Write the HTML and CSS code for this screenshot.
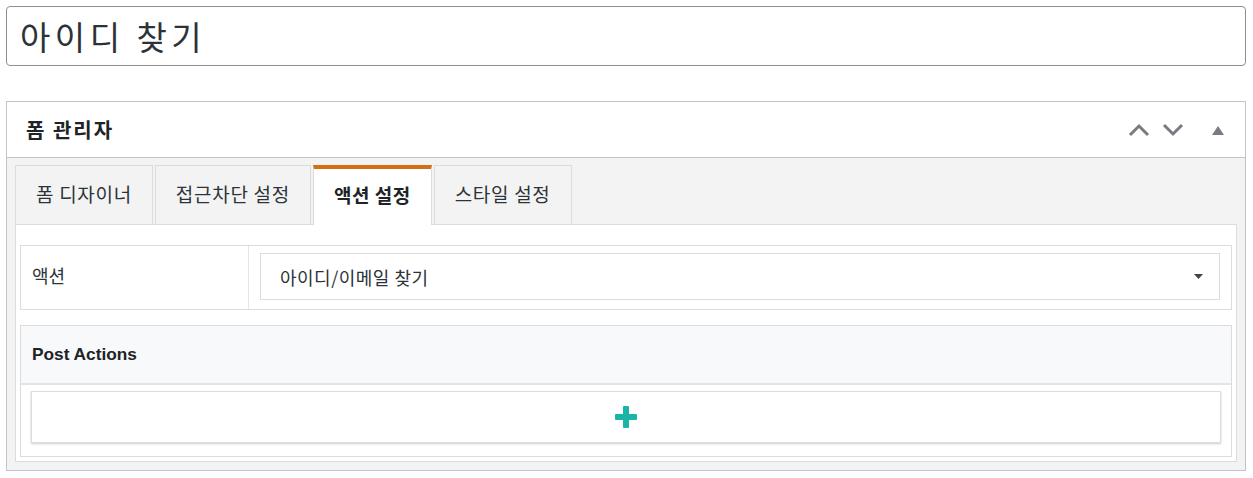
FILE: index.html
```html
<!DOCTYPE html>
<html>

<head>
  <title>아이디 찾기</title>
  <link rel="stylesheet" href="styles.css">
</head>

<body>
  <div class="title-box">아이디 찾기</div>

  <div class="postbox">
    <div class="postbox-header">
      <h2>폼 관리자</h2>
      <div class="handle-actions">
        <svg class="chevron" width="22" height="14" viewBox="0 0 22 14">
          <path d="M2 12 L11 3 L20 12" fill="none" stroke="#787c82" stroke-width="3"/>
        </svg>
        <svg class="chevron" width="22" height="14" viewBox="0 0 22 14">
          <path d="M2 2 L11 11 L20 2" fill="none" stroke="#787c82" stroke-width="3"/>
        </svg>
        <svg class="toggle" width="12" height="10" viewBox="0 0 12 10">
          <path d="M0 10 L6 1 L12 10 Z" fill="#787c82"/>
        </svg>
      </div>
    </div>

    <div class="tab-area">
      <div class="tabs">
        <div class="tab">폼 디자이너</div>
        <div class="tab">접근차단 설정</div>
        <div class="tab active">액션 설정</div>
        <div class="tab">스타일 설정</div>
      </div>

      <div class="tab-content">
        <div class="field-row">
          <div class="field-label">액션</div>
          <div class="field-value">
            <div class="select">
              <span>아이디/이메일 찾기</span>
              <svg width="9" height="5" viewBox="0 0 9 5">
                <path d="M0 0 L9 0 L4.5 5 Z" fill="#444"/>
              </svg>
            </div>
          </div>
        </div>

        <div class="post-actions">
          <div class="post-actions-header">Post Actions</div>
          <div class="post-actions-body">
            <div class="add-button">
              <svg width="22" height="22" viewBox="0 0 22 22">
                <rect x="8" y="0" width="6" height="22" rx="1" fill="#1bb5a8"/>
                <rect x="0" y="8" width="22" height="6" rx="1" fill="#1bb5a8"/>
              </svg>
            </div>
          </div>
        </div>
      </div>
    </div>
  </div>
</body>

</html>
```

FILE: styles.css
```css
body {
  margin: 0;
  padding: 6px 7px 6px 6px;
  font-family: "Noto Sans CJK KR", "Noto Sans", sans-serif;
  color: #1d2327;
  background-color: white;
}

.title-box {
  height: 58px;
  border: 1px solid #8c8f94;
  border-radius: 4px;
  padding: 0 13px;
  font-size: 33px;
  line-height: 58px;
  letter-spacing: 4.5px;
  color: #2c3338;
}

.postbox {
  margin-top: 35px;
  border: 1px solid #c3c4c7;
}

.postbox-header {
  height: 55px;
  border-bottom: 1px solid #c3c4c7;
  display: flex;
  align-items: center;
  justify-content: space-between;
  padding: 0 21px 0 19px;
}

.postbox-header h2 {
  margin: 0;
  font-size: 20px;
  font-weight: bold;
  letter-spacing: 2px;
}

.handle-actions {
  display: flex;
  align-items: center;
}

.chevron {
  margin-left: 12px;
}

.toggle {
  margin-left: 28px;
}

.tab-area {
  background-color: #f3f3f3;
  padding: 7px 8px 8px 8px;
}

.tabs {
  display: flex;
  gap: 2px;
}

.tab {
  height: 58px;
  padding: 0 20px;
  border: 1px solid #dcdcde;
  border-bottom: none;
  font-size: 19px;
  line-height: 56px;
  letter-spacing: 0.7px;
  color: #2c3338;
  background-color: #f3f3f3;
}

.tab.active {
  background-color: white;
  border-top: 4px solid #d46f15;
  height: 56px;
  line-height: 52px;
  font-weight: bold;
  letter-spacing: 0.5px;
  color: #1d2327;
  position: relative;
  margin-bottom: -1px;
  z-index: 1;
}

.tab-content {
  background-color: white;
  border: 1px solid #dcdcde;
  padding: 20px 4px 4px 4px;
}

.field-row {
  display: flex;
  height: 63px;
  border: 1px solid #dcdcde;
}

.field-label {
  width: 216px;
  padding-left: 11px;
  border-right: 1px solid #e4e4e4;
  font-size: 18px;
  line-height: 58px;
  color: #2c3338;
}

.field-value {
  flex: 1;
  padding: 7px 11px 8px 11px;
}

.select {
  height: 45px;
  border: 1px solid #dcdcde;
  display: flex;
  align-items: center;
  justify-content: space-between;
  padding: 0 16px 0 19px;
  font-size: 18px;
  letter-spacing: 0.5px;
  color: #2c3338;
}

.post-actions {
  margin-top: 15px;
  border: 1px solid #dcdcde;
}

.post-actions-header {
  height: 57px;
  background-color: #f8f9fa;
  border-bottom: 2px solid #e2e4e7;
  padding-left: 11px;
  font-family: "Liberation Sans", Arial, sans-serif;
  font-size: 17.3px;
  font-weight: bold;
  line-height: 57px;
}

.post-actions-body {
  padding: 6px 10px 13px 10px;
}

.add-button {
  height: 50px;
  border: 1px solid #dcdcde;
  box-shadow: 0 1px 2px rgba(0, 0, 0, 0.2);
  display: flex;
  align-items: center;
  justify-content: center;
}
```
